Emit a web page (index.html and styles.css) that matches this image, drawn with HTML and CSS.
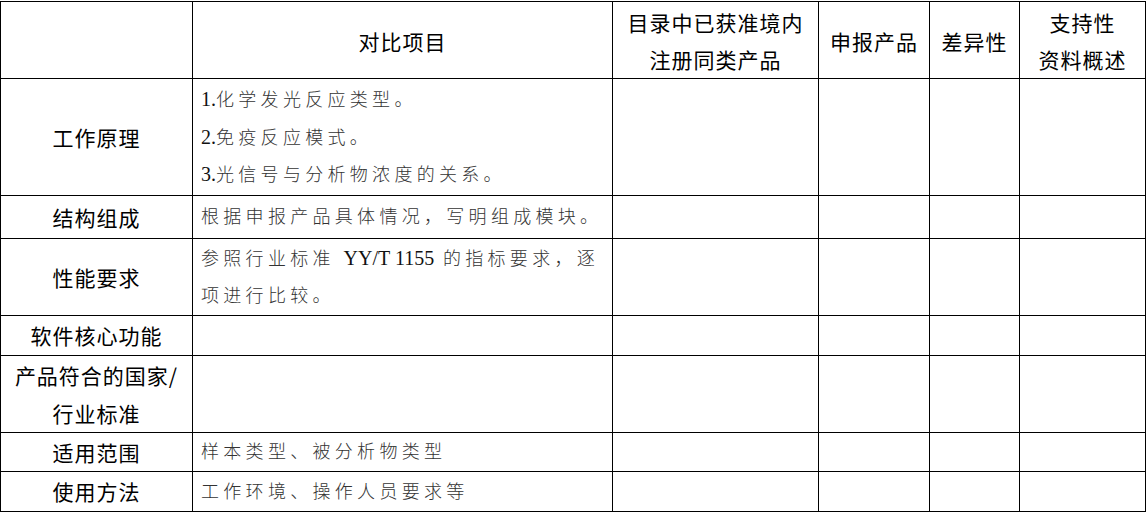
FILE: index.html
```html
<!DOCTYPE html>
<html lang="zh-CN">
<head>
<meta charset="utf-8">
<title>对比项目</title>
<link rel="stylesheet" href="styles.css">
</head>
<body>
<table class="cmp">
  <colgroup>
    <col class="c1"><col class="c2"><col class="c3"><col class="c4"><col class="c5"><col class="c6">
  </colgroup>
  <tr class="r-head">
    <td class="head"></td>
    <td class="head">对比项目</td>
    <td class="head">目录中已获准境内<br>注册同类产品</td>
    <td class="head">申报产品</td>
    <td class="head">差异性</td>
    <td class="head">支持性<br>资料概述</td>
  </tr>
  <tr class="r-work">
    <td class="label">工作原理</td>
    <td class="desc multi3"><span class="num">1.</span>化学发光反应类型。<br><span class="num">2.</span>免疫反应模式。<br><span class="num">3.</span>光信号与分析物浓度的关系。</td>
    <td></td><td></td><td></td><td></td>
  </tr>
  <tr class="r-struct">
    <td class="label">结构组成</td>
    <td class="desc">根据申报产品具体情况，写明组成模块。</td>
    <td></td><td></td><td></td><td></td>
  </tr>
  <tr class="r-perf">
    <td class="label">性能要求</td>
    <td class="desc multi">参照行业标准 <span class="num">YY/T 1155</span> 的指标要求，逐<br>项进行比较。</td>
    <td></td><td></td><td></td><td></td>
  </tr>
  <tr class="r-soft">
    <td class="label">软件核心功能</td>
    <td class="desc"></td>
    <td></td><td></td><td></td><td></td>
  </tr>
  <tr class="r-std">
    <td class="label multi">产品符合的国家/<br>行业标准</td>
    <td class="desc"></td>
    <td></td><td></td><td></td><td></td>
  </tr>
  <tr class="r-scope">
    <td class="label">适用范围</td>
    <td class="desc">样本类型、被分析物类型</td>
    <td></td><td></td><td></td><td></td>
  </tr>
  <tr class="r-use">
    <td class="label">使用方法</td>
    <td class="desc">工作环境、操作人员要求等</td>
    <td></td><td></td><td></td><td></td>
  </tr>
</table>
</body>
</html>
```

FILE: styles.css
```css
html, body {
  margin: 0;
  padding: 0;
  background: #fff;
}
body {
  padding-top: 1px;
}
.cmp {
  border-collapse: collapse;
  table-layout: fixed;
  width: 1146px;
}
.cmp td {
  border: 1px solid #000;
  padding: 0;
  vertical-align: middle;
}
.c1 { width: 192px; }
.c2 { width: 420px; }
.c3 { width: 206px; }
.c4 { width: 111px; }
.c5 { width: 90px; }
.c6 { width: 126px; }

.r-head { height: 76px; }
.r-work { height: 116px; }
.r-struct { height: 43px; }
.r-perf { height: 77px; }
.r-soft { height: 40px; }
.r-std { height: 77px; }
.r-scope { height: 39px; }
.r-use { height: 40px; }

.cmp .head,
.cmp .label {
  font-family: "Noto Sans CJK SC", "Noto Sans", sans-serif;
  font-size: 21px;
  letter-spacing: 1px;
  line-height: 30px;
  color: #000;
  text-align: center;
}
.cmp .head {
  line-height: 37px;
  padding-top: 2px;
}
.cmp .label.multi {
  line-height: 38px;
}
.cmp .desc {
  font-family: "Liberation Serif", "Noto Sans CJK SC", serif;
  font-size: 18px;
  font-weight: 300;
  letter-spacing: 4.3px;
  line-height: 30px;
  color: #333;
  text-align: left;
  padding-left: 8px;
  padding-top: 1px;
}
.cmp .desc.multi {
  line-height: 37px;
  padding-top: 2px;
}
.cmp .desc.multi3 {
  line-height: 37.5px;
  padding-top: 3px;
}
.desc .num {
  font-family: "Liberation Serif", serif;
  font-size: 20px;
  font-weight: 400;
  letter-spacing: 0;
  line-height: 0;
  color: #111;
}
```
